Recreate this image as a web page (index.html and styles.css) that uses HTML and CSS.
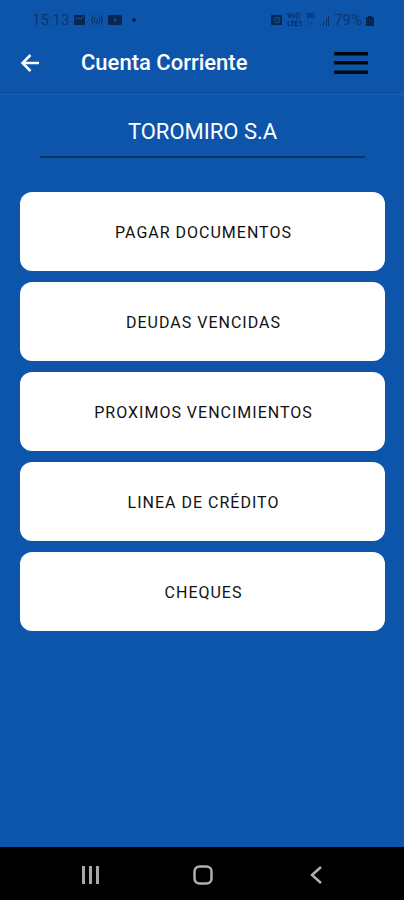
FILE: index.html
```html
<!DOCTYPE html>
<html lang="es">
<head>
  <meta charset="utf-8">
  <meta name="viewport" content="width=device-width, initial-scale=1">
  <title>Cuenta Corriente</title>
  <link rel="stylesheet" href="styles.css">
</head>
<body>
  <div class="status">
    <div class="status-group">
      <span class="clock">15:13</span>
      <svg width="13" height="12" viewBox="0 0 13 12" aria-hidden="true"><rect x="1" y="1" width="11" height="10" rx="1" fill="currentColor"/><path d="M2 5l3-1 3 1 3-3" fill="none" stroke="#0d55ab"/></svg>
      <svg width="14" height="12" viewBox="0 0 14 12" fill="none" stroke="currentColor" opacity=".8" aria-hidden="true"><path d="M3 1Q0 6 3 11M5 3q-2 3 0 6M9 3q2 3 0 6M11 1q3 5 0 10M7 5v5"/></svg>
      <svg width="14" height="12" viewBox="0 0 14 12" aria-hidden="true"><rect x="0" y="1" width="14" height="10" rx="2" fill="currentColor"/><path d="M6 4l3 2-3 2z" fill="#0d55ab"/></svg>
      <span class="dot"></span>
    </div>
    <div class="status-group status-right">
      <svg width="12" height="12" viewBox="0 0 12 12" aria-hidden="true"><rect x="0" y="1" width="11" height="10" rx="1" fill="currentColor"/><circle cx="6" cy="6" r="3" fill="none" stroke="#0d55ab"/><path d="M6 4v2h2" fill="none" stroke="#0d55ab"/></svg>
      <span class="network">Vo))<br>LTE1</span>
      <span class="network">3G<br>↓↑</span>
      <svg width="11" height="11" viewBox="0 0 11 11" fill="currentColor" aria-hidden="true"><path d="M1 9h1v2H1zM4 6h1v5H4zM7 3h1v8H7zM9 1h1v10H9z" opacity=".7"/></svg>
      <span class="level">79%</span>
      <svg width="8" height="11" viewBox="0 0 8 11" fill="currentColor" aria-hidden="true"><path d="M2 1h4v1h2v9H0V2h2z"/></svg>
    </div>
  </div>

  <header class="header">
    <button class="icon-button" type="button" aria-label="Volver">
      <svg width="20" height="20" viewBox="0 0 20 20" fill="none" stroke="#fff" stroke-width="2.500" aria-hidden="true"><path d="M19 10H3M10.500 2L2.500 10l8 8"/></svg>
    </button>
    <h1 class="title">Cuenta Corriente</h1>
    <button class="icon-button" type="button" aria-label="Menú">
      <svg width="34" height="24" viewBox="0 0 34 24" fill="#03080f" aria-hidden="true"><path d="M0 1h34v3.500H0zM0 10h34v3.500H0zM0 19.500h34V23H0z"/></svg>
    </button>
  </header>

  <main class="content">
    <h2 class="company">TOROMIRO S.A</h2>
    <div class="options">
      <button class="option" type="button">PAGAR DOCUMENTOS</button>
      <button class="option" type="button">DEUDAS VENCIDAS</button>
      <button class="option" type="button">PROXIMOS VENCIMIENTOS</button>
      <button class="option" type="button">LINEA DE CRÉDITO</button>
      <button class="option" type="button">CHEQUES</button>
    </div>
  </main>

  <nav class="system-nav" aria-label="Sistema">
    <button class="icon-button" type="button" aria-label="Recientes">
      <svg width="20" height="20" viewBox="0 0 20 20" fill="#a8a8a8" aria-hidden="true"><path d="M1 1h3v18H1zM8 1h3v18H8zM15 1h3v18h-3z"/></svg>
    </button>
    <button class="icon-button" type="button" aria-label="Inicio">
      <svg width="20" height="20" viewBox="0 0 20 20" fill="none" stroke="#b0b0b0" stroke-width="2.500" aria-hidden="true"><rect x="1.500" y="1.500" width="17" height="17" rx="5"/></svg>
    </button>
    <button class="icon-button" type="button" aria-label="Atrás">
      <svg width="20" height="20" viewBox="0 0 20 20" fill="none" stroke="#b0b0b0" stroke-width="2.500" aria-hidden="true"><path d="M15 2l-9 8 9 8"/></svg>
    </button>
  </nav>
</body>
</html>
```

FILE: styles.css
```css
* {
  box-sizing: border-box;
}

body {
  margin: 0;
  min-height: 100vh;
  display: flex;
  flex-direction: column;
  background: #0d55ab;
  color: #fff;
  font-family: Roboto, "Liberation Sans", sans-serif;
}

button {
  border: 0;
  font: inherit;
  cursor: pointer;
}

svg {
  display: block;
}

.status {
  display: flex;
  justify-content: space-between;
  height: 40px;
  padding: 0 30px 0 32px;
  color: #08264f;
}

.status-group {
  display: flex;
  align-items: center;
  gap: 4px;
}

.clock,
.level {
  font-size: 15px;
  color: #0a3570;
}

.dot {
  width: 4px;
  height: 4px;
  margin-left: 6px;
  border-radius: 50%;
  background: currentColor;
}

.network {
  font-size: 7px;
  line-height: 8px;
  font-weight: 500;
}

.header {
  display: flex;
  align-items: center;
  height: 55px;
  padding: 0 36px 8px 20px;
  border-bottom: 1px solid #1b60b3;
}

.icon-button {
  padding: 0;
  background: none;
}

.title {
  flex: 1;
  margin: 0 0 0 41px;
  font-size: 22px;
  line-height: 28px;
  font-weight: 500;
}

.content {
  flex: 1;
  padding: 21px 19px 32px 20px;
}

.company {
  margin: 0 20px 34px;
  padding-bottom: 8px;
  border-bottom: 2px solid #0b3565;
  font-size: 22px;
  line-height: 32px;
  font-weight: 400;
  text-align: center;
}

.options {
  display: grid;
  gap: 11px;
}

.option {
  min-height: 79px;
  padding: 2px 6px 0 8px;
  border-radius: 12px;
  background: #fff;
  color: #111;
  font-size: 16px;
  letter-spacing: 1px;
}

.system-nav {
  display: flex;
  justify-content: space-around;
  align-items: center;
  height: 53px;
  padding: 2px 32px 0 35px;
  background: #000;
}
```
